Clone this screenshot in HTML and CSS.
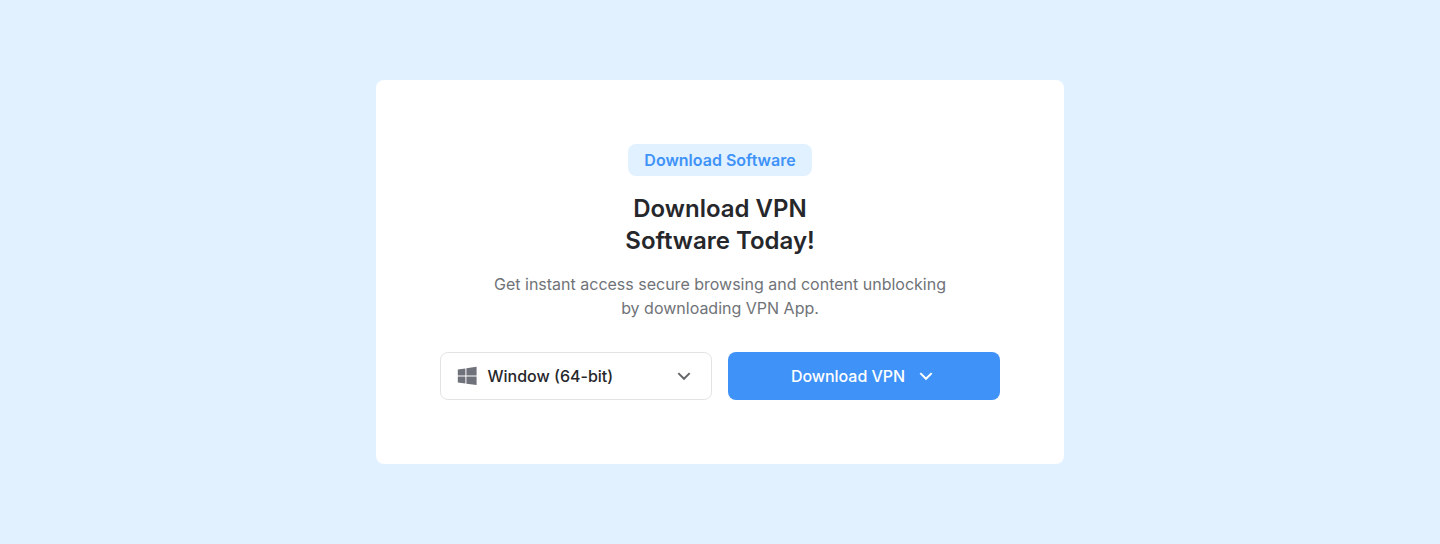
FILE: index.html
```html
<!DOCTYPE html>
<html lang="en">
<head>
<meta charset="utf-8">
<title>Download VPN</title>
<link rel="stylesheet" href="styles.css">
</head>
<body>
<main class="card">
  <span class="badge">Download Software</span>
  <h1 class="title">Download VPN<br>Software Today!</h1>
  <p class="description">Get instant access secure browsing and content unblocking<br>by downloading VPN App.</p>
  <div class="actions">
    <button class="select" type="button">
      <svg class="windows" viewBox="0 0 20 20" width="20" height="20" fill="currentColor" aria-hidden="true">
        <path d="M.8 3.500 8.400 2.400V9.500H.8ZM9.400 2.200 19.600.8V9.500H9.400ZM.8 10.400H8.400V17.500L.8 16.400ZM9.400 10.400H19.600V19.100L9.400 17.700Z"/>
      </svg>
      <span class="select-label">Window (64-bit)</span>
      <svg class="chevron" viewBox="0 0 20 20" width="20" height="20" aria-hidden="true"><path d="M4.300 7.100 10 12.800l5.700-5.700"/></svg>
    </button>
    <button class="download" type="button">
      <span>Download VPN</span>
      <svg class="chevron" viewBox="0 0 20 20" width="20" height="20" aria-hidden="true"><path d="M4.300 7.100 10 12.800l5.700-5.700"/></svg>
    </button>
  </div>
</main>
</body>
</html>
```
FILE: styles.css
```css
* { box-sizing: border-box; }

body {
  margin: 0;
  min-height: 100vh;
  display: flex;
  align-items: center;
  justify-content: center;
  background: #e1f1ff;
  font-family: Inter, "Liberation Sans", sans-serif;
}

.card {
  width: 688px;
  height: 384px;
  padding: 64px;
  display: flex;
  flex-direction: column;
  align-items: center;
  background: #fff;
  border-radius: 8px;
  text-align: center;
}

.badge {
  padding: 4px 16px;
  border-radius: 8px;
  background: #e1f1ff;
  color: #3f93f8;
  font-size: 16px;
  font-weight: 600;
  line-height: 24px;
}

.title {
  margin: 17px 0 0;
  color: #26272b;
  font-size: 24px;
  font-weight: 600;
  line-height: 32px;
}

.description {
  margin: 15px 0 0;
  color: #707378;
  font-size: 16px;
  line-height: 24px;
}

.actions {
  width: 100%;
  margin-top: 32px;
  display: grid;
  grid-template-columns: 1fr 1fr;
  gap: 16px;
}

.select,
.download {
  height: 48px;
  display: flex;
  align-items: center;
  border-radius: 8px;
  font: 500 16px/24px Inter, "Liberation Sans", sans-serif;
}

.select {
  padding: 0 17px 0 16px;
  gap: 10.5px;
  border: 1px solid #e4e4e7;
  background: #fff;
  color: #26272b;
}

.select-label {
  flex: 1;
  text-align: left;
}

.windows { color: #70727b; }
.select .chevron { color: #66686c; }

.download {
  justify-content: center;
  padding: 0 7px 0 6px;
  gap: 11px;
  border: 0;
  background: #3f93f8;
  color: #fff;
  letter-spacing: -0.05px;
}

.chevron path {
  fill: none;
  stroke: currentColor;
  stroke-width: 2;
}
```
